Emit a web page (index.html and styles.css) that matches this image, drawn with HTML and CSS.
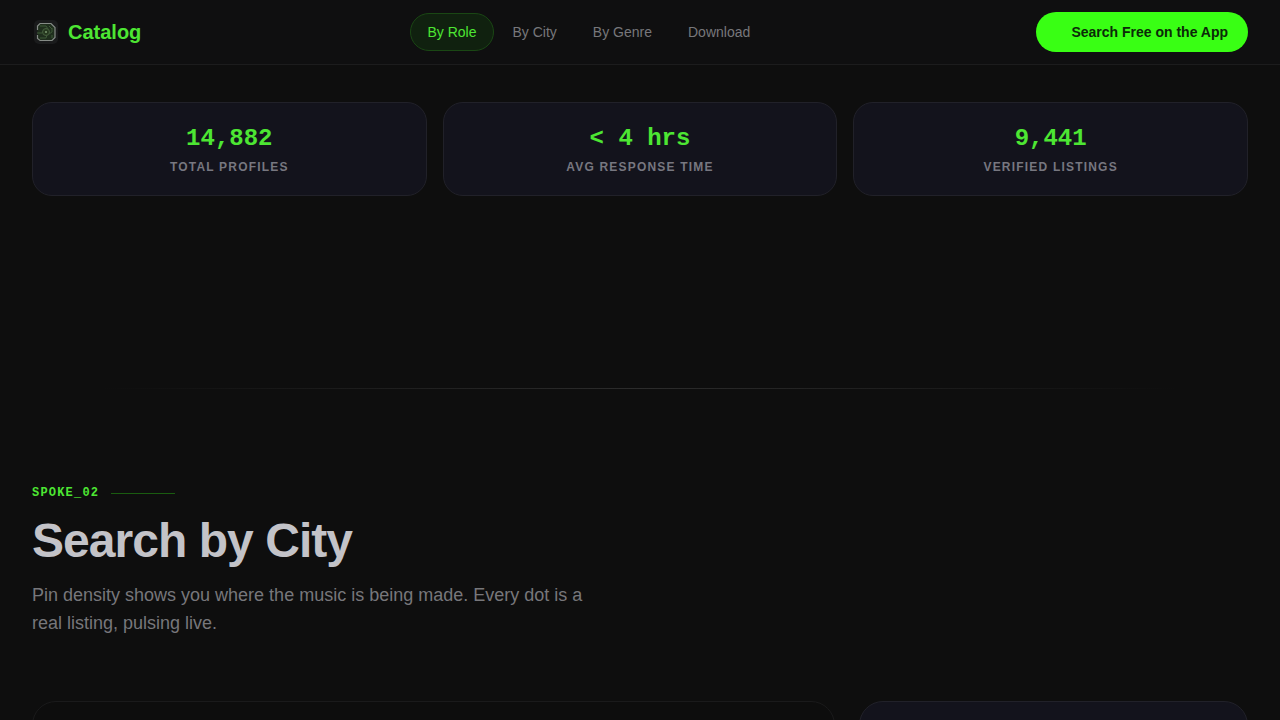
FILE: index.html
```html
<!DOCTYPE html>
<html lang="en">
<head>
    <meta charset="UTF-8">
    <meta name="viewport" content="width=device-width, initial-scale=1.0">
    <title>Catalog</title>
    <link rel="stylesheet" href="styles.css">
</head>
<body>
    <header class="header">
        <a class="logo" href="#">
            <svg class="logo-icon" viewBox="0 0 28 28" aria-hidden="true">
                <rect x="2" y="2" width="24" height="24" rx="5" fill="#1a1b1c"/>
                <path d="M5.500 12V8L8 5.500h11l4 4v10L20 22.500H8L5.500 20.500V17" fill="#1f2e1d" stroke="#858b86" stroke-width="1.200"/>
                <path d="M8 8h6l2 3M8 20h6l1-3M20 10v4l-3 2M20 20v-3M5 15h5M17 8l3 3" fill="none" stroke="#3f5a39"/>
                <circle cx="14" cy="14" r="3.500" fill="#26381f" stroke="#455f3e"/>
                <circle cx="14" cy="14" r="1" fill="#7d9a72"/>
            </svg>
            <span>Catalog</span>
        </a>
        <nav class="nav">
            <a class="nav-link active" href="#role">By Role</a>
            <a class="nav-link" href="#city">By City</a>
            <a class="nav-link" href="#genre">By Genre</a>
            <a class="nav-link" href="#download">Download</a>
        </nav>
        <button class="cta" type="button">Search Free on the App</button>
    </header>

    <main>
        <section class="stats" id="role">
            <div class="stat">
                <div class="stat-value">14,882</div>
                <div class="stat-label">Total Profiles</div>
            </div>
            <div class="stat">
                <div class="stat-value">&lt; 4 hrs</div>
                <div class="stat-label">Avg Response Time</div>
            </div>
            <div class="stat">
                <div class="stat-value">9,441</div>
                <div class="stat-label">Verified Listings</div>
            </div>
        </section>

        <div class="divider"></div>

        <section class="city" id="city">
            <div class="eyebrow">SPOKE_02</div>
            <h2>Search by City</h2>
            <p>Pin density shows you where the music is being made. Every dot is a real listing, pulsing live.</p>
            <div class="panels">
                <div class="panel map"></div>
                <div class="panel list"></div>
            </div>
        </section>
    </main>
</body>
</html>
```

FILE: styles.css
```css
* {
    box-sizing: border-box;
}
body {
    margin: 0;
    background: #0e0e0e;
    color: #c3c3c8;
    font-family: "Liberation Sans", Arial, sans-serif;
}
.header {
    position: sticky;
    top: 0;
    z-index: 10;
    display: flex;
    justify-content: space-between;
    align-items: center;
    padding: 12px 32px;
    background: #0f0f10;
    border-bottom: 1px solid #1c1c1d;
}
.logo {
    display: flex;
    align-items: center;
    gap: 8px;
    color: #4de633;
    font-size: 20px;
    font-weight: bold;
    text-decoration: none;
}
.logo-icon {
    width: 28px;
    height: 28px;
}
.nav {
    display: flex;
    gap: 2px;
}
.nav-link {
    padding: 8px 16px;
    border: 1px solid transparent;
    border-radius: 20px;
    color: #77777b;
    font-size: 14px;
    line-height: 20px;
    text-decoration: none;
}
.nav-link.active {
    background: #10210f;
    border-color: #1a4714;
    color: #4de633;
}
.cta {
    height: 40px;
    padding: 0 20px 0 35px;
    border: none;
    border-radius: 20px;
    background: #39ff14;
    color: #0b2a08;
    font-family: inherit;
    font-size: 14px;
    font-weight: bold;
    cursor: pointer;
}
.stats {
    display: grid;
    grid-template-columns: repeat(3, 1fr);
    gap: 16px;
    padding: 37px 32px 192px;
}
.stat {
    padding: 20px;
    background: #13131c;
    border: 1px solid #212129;
    border-radius: 20px;
    text-align: center;
}
.stat-value {
    color: #4de633;
    font-family: "Liberation Mono", "Courier New", monospace;
    font-size: 24px;
    font-weight: bold;
    line-height: 32px;
}
.stat-label {
    margin-top: 4px;
    color: #777780;
    font-size: 12px;
    font-weight: bold;
    letter-spacing: 0.1em;
    line-height: 16px;
    text-transform: uppercase;
}
.divider {
    height: 1px;
    margin: 0 8%;
    background: linear-gradient(90deg, transparent, #2c2c2c, transparent);
}
.city {
    padding: 96px 32px;
}
.eyebrow {
    display: flex;
    align-items: center;
    gap: 12px;
    color: #4de633;
    font-family: "Liberation Mono", "Courier New", monospace;
    font-size: 12px;
    font-weight: bold;
    letter-spacing: 0.1em;
    line-height: 16px;
}
.eyebrow::after {
    content: "";
    width: 64px;
    height: 1px;
    background: #1a5c10;
}
.city h2 {
    margin: 16px 0;
    font-size: 48px;
    letter-spacing: -0.02em;
    line-height: 48px;
}
.city p {
    max-width: 576px;
    margin: 0 0 64px;
    color: #77777b;
    font-size: 18px;
    line-height: 28px;
}
.panels {
    display: grid;
    grid-template-columns: repeat(12, 1fr);
    gap: 24px;
}
.panel {
    min-height: 400px;
    border: 1px solid #1a1a1b;
    border-radius: 24px;
}
.map {
    grid-column: span 8;
    background: #0d0d0d;
}
.list {
    grid-column: span 4;
    background: #13131c;
    border-color: #212129;
}
```
